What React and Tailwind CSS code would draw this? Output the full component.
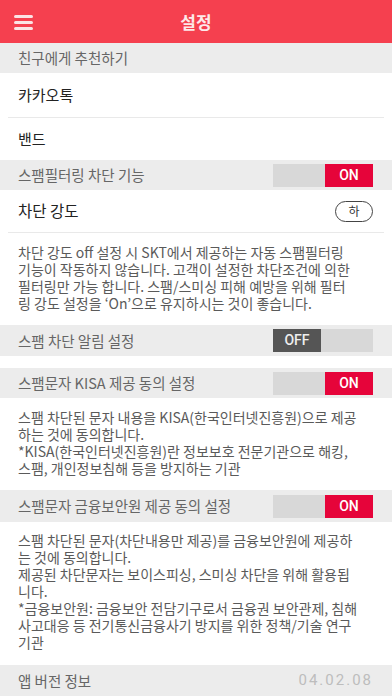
import React from 'react';

const font = { fontFamily: '"Noto Sans CJK KR", "Noto Sans", sans-serif' };

const Section = ({ title, children, className = '' }) => (
  <div className={`flex items-center justify-between bg-[#ececec] pl-[18px] pr-[19px] ${className}`}>
    <span className="text-[14.5px] text-[#666666]">{title}</span>
    {children}
  </div>
);

const Toggle = ({ on }) => (
  <div className="flex h-[23px] w-[100px] bg-[#d8d8d8] text-[14px]" style={{ fontFamily: 'Roboto, sans-serif' }}>
    {on ? (
      <>
        <div className="w-[52px]" />
        <div className="flex flex-1 items-center justify-center bg-[#e6043a] font-medium text-white">ON</div>
      </>
    ) : (
      <>
        <div className="flex w-[48px] items-center justify-center bg-[#555555] font-medium text-[#eeeeee]">OFF</div>
        <div className="flex-1" />
      </>
    )}
  </div>
);

const Desc = ({ lines, className = '' }) => (
  <div className={`px-[18px] text-[14px] leading-[17px] text-[#5a5a5a] ${className}`}>
    {lines.map((l, i) => (
      <div key={i} className="whitespace-nowrap">{l}</div>
    ))}
  </div>
);

const Divider = () => <div className="mx-[8px] h-px bg-[#e9e9e9]" />;

export default function App() {
  return (
    <div className="h-[696px] w-[392px] overflow-hidden bg-white" style={font}>
      <header className="relative flex h-[43px] items-center justify-center bg-[#f5404f]">
        <div className="absolute left-[14px] top-[15px] flex w-[19px] flex-col gap-[3px]">
          <span className="h-[3px] rounded-sm bg-[#fbe3e5]" />
          <span className="h-[3px] rounded-sm bg-[#fbe3e5]" />
          <span className="h-[3px] rounded-sm bg-[#fbe3e5]" />
        </div>
        <h1 className="text-[17px] font-bold text-[#fde9ea]">설정</h1>
      </header>

      <Section title="친구에게 추천하기" className="h-[30px]" />
      <div className="flex h-[44px] items-center px-[18px] text-[15px] text-[#222222]">카카오톡</div>
      <Divider />
      <div className="flex h-[42px] items-center px-[18px] text-[15px] text-[#222222]">밴드</div>

      <Section title="스팸필터링 차단 기능" className="h-[30px]">
        <Toggle on />
      </Section>
      <div className="flex h-[42px] items-center justify-between pl-[18px] pr-[19px]">
        <span className="text-[15.5px] text-[#222222]">차단 강도</span>
        <span className="flex h-[21px] w-[38px] items-center justify-center rounded-full border border-[#444444] text-[12px] text-[#333333]">하</span>
      </div>
      <Divider />
      <Desc
        className="h-[92px] pt-[11px]"
        lines={[
          '차단 강도 off 설정 시 SKT에서 제공하는 자동 스팸필터링',
          '기능이 작동하지 않습니다. 고객이 설정한 차단조건에 의한',
          '필터링만 가능 합니다. 스팸/스미싱 피해 예방을 위해 필터',
          '링 강도 설정을 ‘On’으로 유지하시는 것이 좋습니다.',
        ]}
      />

      <Section title="스팸 차단 알림 설정" className="h-[31px]">
        <Toggle on={false} />
      </Section>
      <div className="h-[12px]" />
      <Section title="스팸문자 KISA 제공 동의 설정" className="h-[30px]">
        <Toggle on />
      </Section>
      <Desc
        className="h-[92px] pt-[11px]"
        lines={[
          '스팸 차단된 문자 내용을 KISA(한국인터넷진흥원)으로 제공',
          '하는 것에 동의합니다.',
          '*KISA(한국인터넷진흥원)란 정보보호 전문기관으로 해킹,',
          '스팸, 개인정보침해 등을 방지하는 기관',
        ]}
      />

      <Section title="스팸문자 금융보안원 제공 동의 설정" className="h-[32px]">
        <Toggle on />
      </Section>
      <Desc
        className="h-[143px] pt-[10px]"
        lines={[
          '스팸 차단된 문자(차단내용만 제공)를 금융보안원에 제공하',
          '는 것에 동의합니다.',
          '제공된 차단문자는 보이스피싱, 스미싱 차단을 위해 활용됩',
          '니다.',
          '*금융보안원: 금융보안 전담기구로서 금융권 보안관제, 침해',
          '사고대응 등 전기통신금융사기 방지를 위한 정책/기술 연구',
          '기관',
        ]}
      />

      <Section title="앱 버전 정보" className="h-[31px]">
        <span className="text-[15px] tracking-[2px] text-[#bdbdbd]" style={{ fontFamily: 'Roboto, sans-serif' }}>04.02.08</span>
      </Section>
    </div>
  );
}
